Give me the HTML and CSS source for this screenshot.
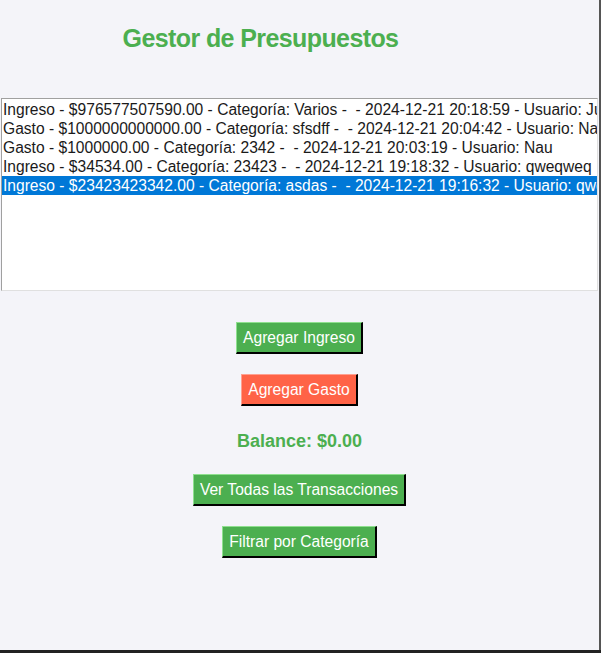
FILE: index.html
```html
<!DOCTYPE html>
<html lang="es">
<head>
<meta charset="utf-8">
<title>Gestor de Presupuestos</title>
<link rel="stylesheet" href="styles.css">
</head>
<body>
<div class="window">
  <h1 class="title">Gestor de Presupuestos</h1>
  <div class="list">
    <div class="row">Ingreso - $976577507590.00 - Categoría: Varios -  - 2024-12-21 20:18:59 - Usuario: Juan</div>
    <div class="row">Gasto - $1000000000000.00 - Categoría: sfsdff -  - 2024-12-21 20:04:42 - Usuario: Nau</div>
    <div class="row">Gasto - $1000000.00 - Categoría: 2342 -  - 2024-12-21 20:03:19 - Usuario: Nau</div>
    <div class="row">Ingreso - $34534.00 - Categoría: 23423 -  - 2024-12-21 19:18:32 - Usuario: qweqweq</div>
    <div class="row selected">Ingreso - $23423423342.00 - Categoría: asdas -  - 2024-12-21 19:16:32 - Usuario: qweqweq</div>
  </div>
  <div class="actions">
    <button class="btn green">Agregar Ingreso</button>
    <button class="btn red">Agregar Gasto</button>
    <div class="balance">Balance: $0.00</div>
    <button class="btn green">Ver Todas las Transacciones</button>
    <button class="btn green">Filtrar por Categoría</button>
  </div>
</div>
</body>
</html>
```
FILE: styles.css
```css
html, body {
  margin: 0;
  padding: 0;
  background: #222;
}
body {
  width: 601px;
  height: 653px;
  overflow: hidden;
}
.window {
  box-sizing: border-box;
  width: 601px;
  height: 650px;
  background: #f4f4f9;
  border-right: 2px solid #555;
  font-family: "Liberation Sans", Arial, sans-serif;
  display: flex;
  flex-direction: column;
}
.title {
  margin: 0;
  padding-top: 24px;
  padding-right: 78px;
  height: 98px;
  box-sizing: border-box;
  text-align: center;
  font-size: 25px;
  letter-spacing: -0.6px;
  line-height: 29px;
  font-weight: bold;
  color: #4caf50;
}
.list {
  margin-left: 1px;
  width: 597px;
  height: 193px;
  box-sizing: border-box;
  background: #fff;
  border-top: 1px solid #a0a0a0;
  border-left: 1px solid #a0a0a0;
  border-right: 1px solid #e0e0e0;
  border-bottom: 1px solid #e0e0e0;
  padding-top: 1px;
  overflow: hidden;
}
.row {
  white-space: pre;
  font-size: 15.6px;
  line-height: 19px;
  height: 19px;
  padding-left: 1px;
  color: #1a1a1a;
  overflow: hidden;
}
.row.selected {
  background: #0078d7;
  color: #fff;
}
.actions {
  display: flex;
  flex-direction: column;
  align-items: center;
  padding-top: 31px;
}
.btn {
  font-family: "Liberation Sans", Arial, sans-serif;
  font-size: 15.6px;
  color: #fff;
  height: 32px;
  padding: 0 6px;
  margin-bottom: 20px;
  border-style: solid;
  border-width: 1px 2px 2px 1px;
  cursor: pointer;
}
.btn.green {
  background: #4caf50;
  border-color: #8fe08f #000 #000 #8fe08f;
}
.btn.red {
  background: #ff6347;
  border-color: #ffa090 #000 #000 #ffa090;
}
.balance {
  font-size: 18px;
  font-weight: bold;
  color: #4caf50;
  line-height: 20px;
  margin-top: 5px;
  margin-bottom: 23px;
}
```
